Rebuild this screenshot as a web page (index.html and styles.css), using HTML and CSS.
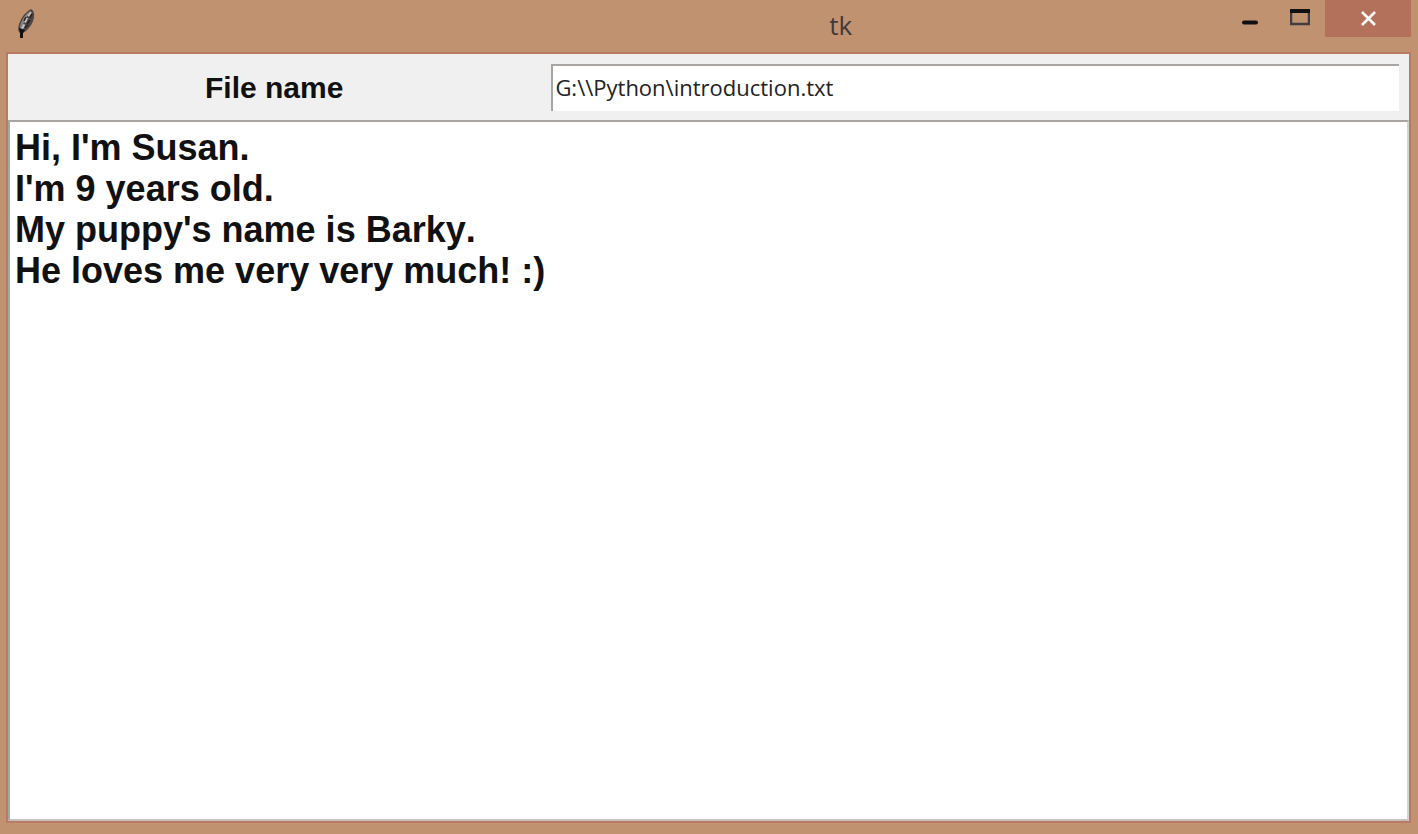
FILE: index.html
```html
<!DOCTYPE html>
<html lang="en">
<head>
<meta charset="utf-8">
<title>tk</title>
<link rel="stylesheet" href="styles.css">
</head>
<body>
<div class="window">
  <header class="titlebar">
    <svg class="feather" width="20" height="32" viewBox="0 0 20 32" aria-hidden="true">
      <path d="M15 1Q19 3 18 10Q16 18 10 23L7 25L6 30L4 30L4 25Q1 23 3 16Q7 5 15 1Z" fill="#4d4747"/>
      <path d="M14 3Q8 7 5 15Q3 20 5 22L8 14Z" fill="#8b8581"/>
      <path d="M15 4Q10 11 8 17L5 23" fill="none" stroke="#c9c3bd" stroke-width="2" stroke-dasharray="5 2"/>
      <path d="M16 6L14 10M14 12L11 16M10 9L8 13M12 17L9 20" stroke="#252223" stroke-width="1.500"/>
      <path d="M3 20L9 22L7 25V30H4V25Z" fill="#111"/>
    </svg>
    <h1 class="title">tk</h1>
    <div class="controls">
      <button class="control" type="button" aria-label="Minimize">
        <svg width="16" height="36" viewBox="0 0 16 36"><path d="M2 22.500H14" stroke="#111" stroke-width="4" stroke-linecap="round"/></svg>
      </button>
      <button class="control" type="button" aria-label="Maximize">
        <svg width="20" height="36" viewBox="0 0 20 36"><path d="M1 11V24H19V11" fill="none" stroke="#433d41" stroke-width="2.500"/><path d="M0 11H20" stroke="#111" stroke-width="4"/></svg>
      </button>
      <button class="control close" type="button" aria-label="Close">
        <svg width="16" height="36" viewBox="0 0 16 36"><path d="M2 12L15 25M15 12L2 25" stroke="#fff" stroke-width="2.600"/></svg>
      </button>
    </div>
  </header>
  <main class="client">
    <div class="form-row">
      <label class="label" for="file-name">File name</label>
      <input class="entry" id="file-name" type="text" value="G:\\Python\introduction.txt">
    </div>
    <textarea class="text" aria-label="File contents" spellcheck="false">Hi, I'm Susan.
I'm 9 years old.
My puppy's name is Barky.
He loves me very very much! :)</textarea>
  </main>
</div>
</body>
</html>
```
FILE: styles.css
```css
* {
  box-sizing: border-box;
}

body {
  margin: 0;
  font-family: "Liberation Sans", Arial, sans-serif;
  color: #111;
}

.window {
  display: flex;
  flex-direction: column;
  min-height: 100vh;
  padding: 0 7px 11px 6px;
  background: #c19270;
}

.titlebar {
  display: grid;
  grid-template-columns: 58.600% 1fr auto;
  height: 52px;
}

.feather {
  margin: 8px 0 0 10px;
}

.title {
  margin: 0;
  padding-top: 8px;
  font: 400 26px/34px "Open Sans", "Noto Sans", sans-serif;
  color: #3f3a3f;
}

.controls {
  display: flex;
  align-items: flex-start;
}

.control {
  display: flex;
  justify-content: center;
  width: 50px;
  height: 37px;
  padding: 0;
  border: 0;
  background: transparent;
}

.close {
  width: 86px;
  background: #b3705a;
}

.client {
  display: flex;
  flex: 1;
  flex-direction: column;
  border: 2px solid #b87a62;
  background: #fff;
}

.form-row {
  display: grid;
  grid-template-columns: 38fr 62fr;
  align-items: center;
  height: 66px;
  background: #f0f0f0;
}

.label {
  padding-top: 1px;
  font-size: 30px;
  font-weight: 700;
  line-height: 36px;
  text-align: center;
}

.entry {
  width: auto;
  height: 47px;
  margin: 0 10px 0 11px;
  padding: 0 2px 2px;
  border: 0;
  border-top: 2px solid #a9a5a2;
  border-left: 2px solid #a9a5a2;
  background: #fff;
  font: 400 22px/32px "Open Sans", "Noto Sans", sans-serif;
  color: #222;
}

.text {
  display: block;
  flex: 1;
  width: 100%;
  padding: 5px;
  border: 2px solid #a9a5a2;
  border-right-color: #d6d2d0;
  border-bottom-color: #c4c0bd;
  background: #fff;
  font: 700 36px/41px "Liberation Sans", Arial, sans-serif;
  font-kerning: none;
  color: #111;
  resize: none;
  outline: 0;
}
```
